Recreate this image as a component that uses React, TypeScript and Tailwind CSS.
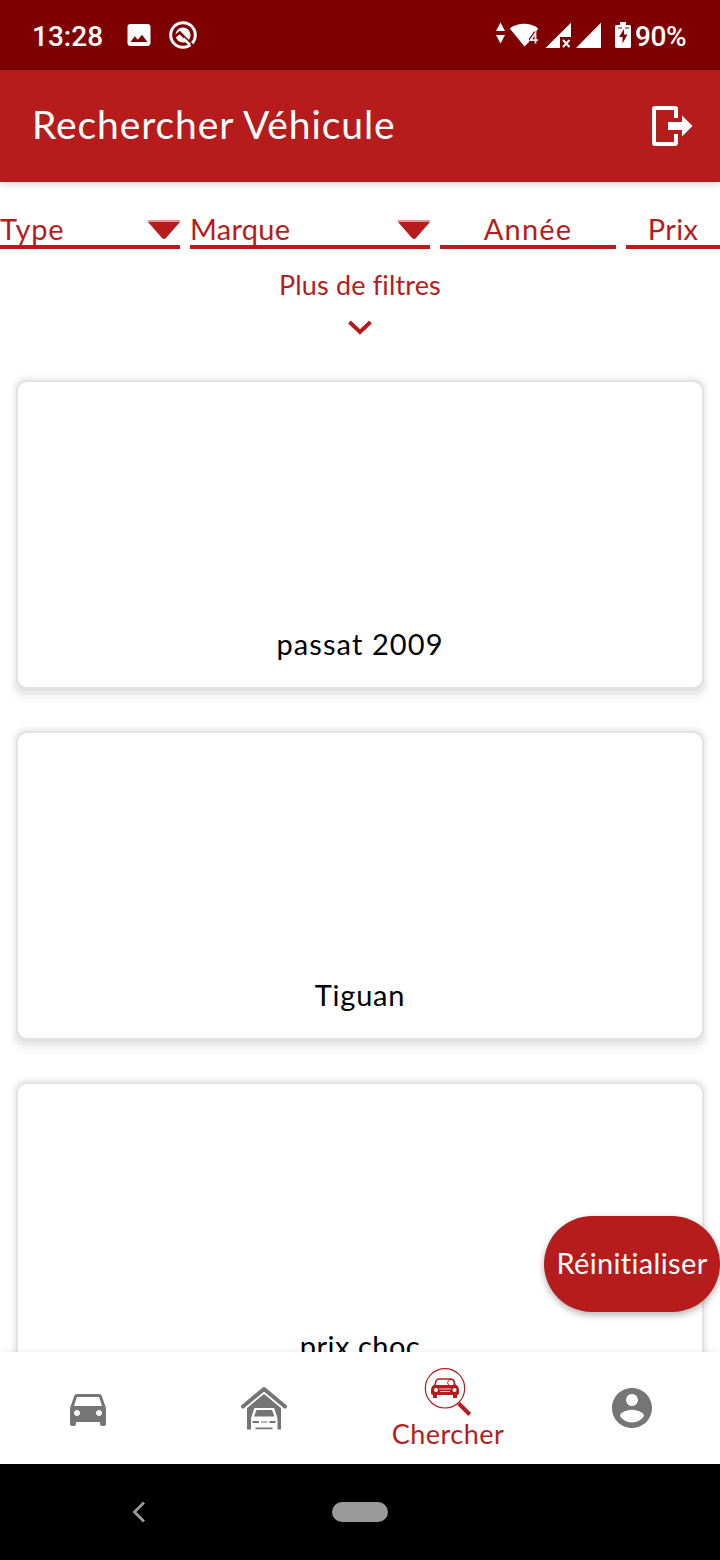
import React from "react";

const CARD_SHADOW =
  "shadow-[0_0_0_2px_#e3e3e3,0_2px_0_2px_#e1e1e1,0_0_0_4px_#f0f0f0,0_4px_0_4px_#ebebeb,0_0_0_6px_#f7f7f7,0_6px_0_6px_#f5f5f5,0_0_0_8px_#fcfcfc,0_8px_0_8px_#fbfbfb]";

function StatusBar() {
  return (
    <div className="flex h-[70px] shrink-0 items-center bg-[#7f0000] pl-8 pr-[33px] font-[Roboto,sans-serif] text-[28px] font-medium leading-none text-white">
      <span className="w-[94px] whitespace-nowrap pt-1 tracking-[0px]">13:28</span>
      <svg className="h-7 w-[76px]" viewBox="126 21 76 28">
        <path
          fill="#fff"
          fillRule="evenodd"
          d="M130.500 24h17a3 3 0 0 1 3 3v16a3 3 0 0 1-3 3h-17a3 3 0 0 1-3-3V27a3 3 0 0 1 3-3zM130.500 42h17l-5.500-7.200-4.200 5-3-3.600z"
        />
        <circle cx="183" cy="35" r="12.300" fill="none" stroke="#fff" strokeWidth="3" />
        <circle cx="183" cy="35" r="7.600" fill="#fff" />
        <path d="M174.500 37l5.200-4.500 14.300 14.300" fill="none" stroke="#7f0000" strokeWidth="2.600" />
        <path d="M183.500 38.500l6.500 6.500" stroke="#fff" strokeWidth="2.500" />
      </svg>
      <svg className="ml-auto h-8 w-[138px]" viewBox="496 19 138 32">
        <g fill="#fff">
          <path d="M496 31h9l-4.500-8.500zM496 35h9l-4.500 8.500z" />
          <path d="M509.800 28.500c8-6.200 20.500-6.200 28.500 0L536 31.500h-2l-5 7v3.500l-4.500 4.500z" />
          <path d="M545.500 48L571 22.800V37h-11v11zM576 48l25-25.200V48z" />
          <path
            fillRule="evenodd"
            d="M620 25v-3h6v3h3.500c.8 0 1.500.7 1.500 1.500v20c0 .8-.7 1.500-1.500 1.500h-13c-.8 0-1.500-.7-1.500-1.500v-20c0-.8.7-1.500 1.500-1.500zM624 29l-5 8h3.500v6.500l5-9H624z"
          />
        </g>
        <path d="M618 28h4M625 28h4" stroke="#7f0000" />
        <path d="M563 40l6.500 7M569.500 40l-6.500 7" stroke="#fff" strokeWidth="2" />
        <path d="M535.500 43.500V33l-5 7.200h7.500" fill="none" stroke="#f3e6e6" strokeWidth="1.800" />
      </svg>
      <span className="ml-px w-[52px] whitespace-nowrap pt-1 tracking-[-0.4px]">90%</span>
    </div>
  );
}

function AppBar() {
  return (
    <header className="z-10 flex h-28 shrink-0 items-center justify-between bg-[#b71c1c] pl-8 pr-[27px] text-white shadow-[0_1px_8px_rgba(0,0,0,0.22)]">
      <h1 className="whitespace-nowrap pb-[3px] text-[39px] leading-none tracking-[0.9px]">Rechercher Véhicule</h1>
      <svg className="h-10 w-[41px]" viewBox="0 0 41 40" fill="#fff">
        <path d="M3 0h20a3 3 0 0 1 3 3v9h-4V4H4v32h18v-8h4v9a3 3 0 0 1-3 3H3a3 3 0 0 1-3-3V3a3 3 0 0 1 3-3z" />
        <path d="M16 16h14V9.500L40.500 20 30 30.500V24H16z" />
      </svg>
    </header>
  );
}

function Caret() {
  return (
    <svg className="mt-1.5 h-5 w-8" viewBox="0 0 32 20">
      <path d="M0 0h32v2H0z" fill="#b71c1c" opacity=".45" />
      <path d="M0 2h32L18 18q-2 2-4 0z" fill="#b71c1c" />
    </svg>
  );
}

function Filters() {
  return (
    <div className="flex shrink-0 gap-2.5 overflow-hidden pt-8 text-[29px] leading-[30px] text-[#b71c1c]">
      <div className="flex h-[35px] w-[180px] shrink-0 justify-between border-b-4 border-[#b71c1c]">
        <span className="tracking-[0.8px]">Type</span>
        <Caret />
      </div>
      <div className="flex h-[35px] w-[240px] shrink-0 justify-between border-b-4 border-[#b71c1c]">
        <span className="tracking-[0.3px]">Marque</span>
        <Caret />
      </div>
      <div className="h-[35px] w-[176px] shrink-0 border-b-4 border-[#b71c1c] text-center tracking-[1.2px]">Année</div>
      <div className="h-[35px] w-[94px] shrink-0 border-b-4 border-[#b71c1c] text-center tracking-[0.4px]">Prix</div>
    </div>
  );
}

function VehicleCard({ title, tracking }: { title: string; tracking: string }) {
  return (
    <article className={`mx-[18px] flex h-[305px] shrink-0 items-end justify-center rounded-[9px] bg-white pb-[27px] ${CARD_SHADOW}`}>
      <h2 className={`whitespace-nowrap text-[29px] leading-8 text-black ${tracking}`}>{title}</h2>
    </article>
  );
}

function GarageIcon() {
  return (
    <svg className="h-12 w-12" viewBox="240 1384 48 48">
      <path d="M243 1406.500L264 1389l21 17.500" fill="none" stroke="#757575" strokeWidth="4" strokeLinejoin="round" strokeLinecap="round" />
      <path d="M247 1408L264 1394l17 14V1429.500h-3.500v-11l-3-9.500c-.3-.8-.7-1-1.500-1h-17.500c-.8 0-1.200.2-1.500 1l-3 9.500v11H247z" fill="#757575" />
      <path d="M256.500 1410h15.500l2.500 6.500H254zM255.500 1427.500h17v1.800h-17zM252.500 1421h6.500v2h-6.500zM269.500 1421h6v2h-6zM261 1421.500h6.500v1H261z" fill="#757575" />
    </svg>
  );
}

function CarSearchIcon() {
  return (
    <svg className="h-12 w-12" viewBox="424 1367 48 48">
      <g fill="none" stroke="#b71c1c">
        <circle cx="445" cy="1387.300" r="19.700" strokeWidth="1.200" />
        <path d="M458.700 1402.500l11 11" strokeWidth="4" />
        <path d="M434.500 1385.500l1.600-5.500c.4-1.300 1-2 2.400-2h13c1.400 0 2 .7 2.400 2l1.600 5.500" strokeWidth="1.500" />
        <path d="M448.500 1384a3.300 3.300 0 1 1 5 0" strokeWidth="1" />
      </g>
      <path d="M433.500 1384h23c1.700 1 2.500 3 2.500 5v3c0 1.200-.6 2-2 2v3h-4v-3h-16v3h-4v-3c-1.400 0-2-.8-2-2v-3c0-2 .8-4 2.500-5z" fill="#b71c1c" />
      <circle cx="436" cy="1389" r="2" fill="#fff" />
      <circle cx="454.500" cy="1389" r="2" fill="#fff" />
      <path d="M439 1388h12M440 1390.500h10" stroke="#fff" strokeWidth=".8" />
    </svg>
  );
}

function BottomNav() {
  return (
    <nav className="z-10 grid h-28 shrink-0 grid-cols-[176px_176px_192px_176px] items-center justify-items-center bg-white text-[#757575] shadow-[0_-1px_6px_rgba(0,0,0,0.07)]">
      <svg className="h-12 w-12" viewBox="0 0 24 24" fill="currentColor">
        <path d="M18.920 6.010C18.720 5.420 18.160 5 17.500 5h-11c-.66 0-1.210.42-1.420 1.010L3 12v8c0 .55.45 1 1 1h1c.55 0 1-.45 1-1v-1h12v1c0 .55.45 1 1 1h1c.55 0 1-.45 1-1v-8l-2.080-5.990zM6.500 16c-.83 0-1.500-.67-1.500-1.500S5.670 13 6.500 13s1.500.67 1.500 1.500S7.330 16 6.500 16zm11 0c-.83 0-1.500-.67-1.500-1.500s.67-1.500 1.500-1.500 1.500.67 1.500 1.500-.67 1.500-1.500 1.500zM5 11l1.500-4.500h11L19 11H5z" />
      </svg>
      <GarageIcon />
      <div className="flex h-full flex-col items-center pt-4 text-[#b71c1c]">
        <CarSearchIcon />
        <span className="mt-[3px] text-[27px] leading-[30px] tracking-[0.5px]">Chercher</span>
      </div>
      <svg className="h-12 w-12" viewBox="0 0 24 24" fill="currentColor">
        <path d="M12 2C6.480 2 2 6.480 2 12s4.480 10 10 10 10-4.480 10-10S17.520 2 12 2zm0 3c1.660 0 3 1.340 3 3s-1.340 3-3 3-3-1.340-3-3 1.340-3 3-3zm0 14.200c-2.500 0-4.710-1.280-6-3.220.03-1.990 4-3.080 6-3.080 1.990 0 5.970 1.090 6 3.080-1.290 1.940-3.500 3.220-6 3.220z" />
      </svg>
    </nav>
  );
}

function SystemNav() {
  return (
    <div className="grid h-24 shrink-0 grid-cols-[276px_168px_276px] items-center justify-items-center bg-black">
      <svg className="h-6 w-4" viewBox="0 0 16 24">
        <path d="M14 2.500L4.500 12l9.500 9.500" fill="none" stroke="#9a9a9a" strokeWidth="2.800" />
      </svg>
      <span className="h-5 w-14 rounded-full bg-[#9a9a9a]" />
    </div>
  );
}

export default function App() {
  return (
    <div className="relative flex h-[1560px] w-[720px] flex-col overflow-hidden bg-white font-[Lato,sans-serif]">
      <StatusBar />
      <AppBar />
      <main className="flex min-h-0 flex-1 flex-col overflow-hidden bg-white">
        <Filters />
        <button className="flex h-[133px] shrink-0 flex-col items-center pt-[20px] text-[#b71c1c]">
          <span className="text-[27px] leading-[32px] tracking-[0.15px]">Plus de filtres</span>
          <svg className="mt-[18px] h-4 w-6" viewBox="0 0 24 16">
            <path d="M1.500 3L12 13 22.500 3" fill="none" stroke="#b71c1c" strokeWidth="4" />
          </svg>
        </button>
        <div className="flex min-h-0 flex-1 flex-col gap-[46px]">
          <VehicleCard title="passat 2009" tracking="tracking-[1.1px]" />
          <VehicleCard title="Tiguan" tracking="tracking-[0.8px]" />
          <VehicleCard title="prix choc" tracking="tracking-[0.5px]" />
        </div>
      </main>
      <BottomNav />
      <SystemNav />
      <button className="absolute right-0 top-[1216px] z-20 flex h-24 w-44 items-center justify-center whitespace-nowrap rounded-full bg-[#b71c1c] pb-[3px] text-[29px] tracking-[0.35px] text-white shadow-[0_3px_7px_rgba(0,0,0,0.3)]">
        Réinitialiser
      </button>
    </div>
  );
}
